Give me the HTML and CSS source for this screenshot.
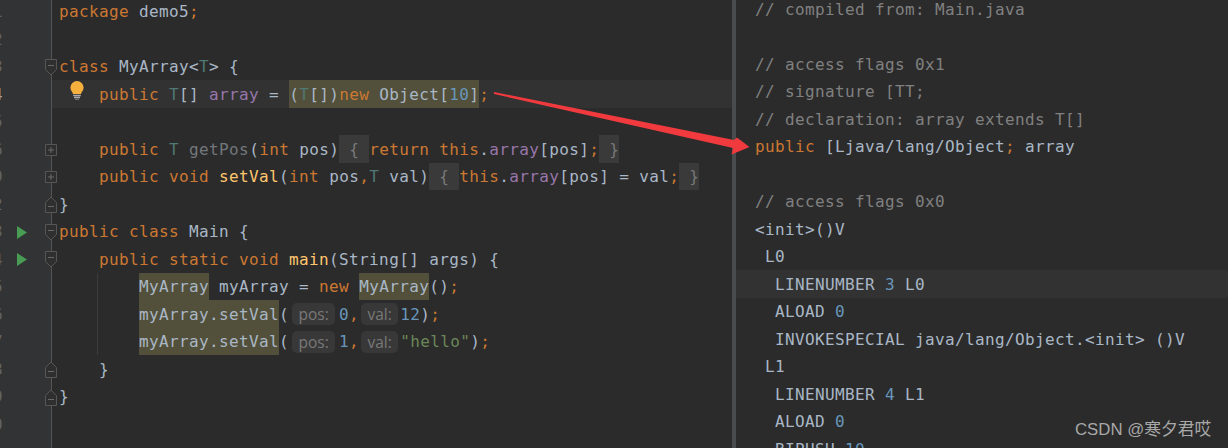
FILE: index.html
```html
<!DOCTYPE html>
<html lang="en">
<head>
<meta charset="utf-8">
<title>Main.java</title>
<link rel="stylesheet" href="styles.css">
</head>
<body>
<svg class="defs" width="0" height="0" aria-hidden="true">
  <symbol id="fold-open" viewBox="0 0 12 17"><path d="M.5 .5H11.5V10.5L6 16 .5 10.5Z" fill="#2f2f30" stroke="#565656"/><path d="M3 6.500H9" stroke="#6a6a6a"/></symbol>
  <symbol id="fold-end" viewBox="0 0 12 17"><path d="M.5 16.500H11.500V6.500L6 1 .5 6.500Z" fill="#2f2f30" stroke="#565656"/><path d="M3 10.500H9" stroke="#6a6a6a"/></symbol>
  <symbol id="fold-plus" viewBox="0 0 12 12"><path d="M.5 .5H11.500V11.500H.5Z" fill="#2f2f30" stroke="#565656"/><path d="M3 6H9M6 3V9" stroke="#6a6a6a"/></symbol>
  <symbol id="run" viewBox="0 0 10 13"><path d="M0 0L10 6.500 0 13Z" fill="#499c54"/></symbol>
</svg>
<main class="window">
  <section class="editor">
    <div class="gutter">
      <div class="gline"><span class="num">1</span></div>
      <div class="gline"><span class="num">2</span></div>
      <div class="gline"><span class="num">3</span><svg class="fold tall"><use href="#fold-open"/></svg></div>
      <div class="gline"><span class="num cur">4</span></div>
      <div class="gline"><span class="num">5</span></div>
      <div class="gline"><span class="num">6</span><svg class="fold small"><use href="#fold-plus"/></svg></div>
      <div class="gline"><span class="num">9</span><svg class="fold small"><use href="#fold-plus"/></svg></div>
      <div class="gline"><span class="num">12</span><svg class="fold tall"><use href="#fold-end"/></svg></div>
      <div class="gline"><span class="num">13</span><svg class="run"><use href="#run"/></svg><svg class="fold tall"><use href="#fold-open"/></svg></div>
      <div class="gline"><span class="num">14</span><svg class="run"><use href="#run"/></svg><svg class="fold tall"><use href="#fold-open"/></svg></div>
      <div class="gline"><span class="num">15</span></div>
      <div class="gline"><span class="num">16</span></div>
      <div class="gline"><span class="num">17</span></div>
      <div class="gline"><span class="num">18</span><svg class="fold tall"><use href="#fold-end"/></svg></div>
      <div class="gline"><span class="num">19</span><svg class="fold tall"><use href="#fold-end"/></svg></div>
      <div class="gline"><span class="num">20</span></div>
    </div>
    <div class="code">
      <div class="line"><span class="k">package</span> demo5<span class="k">;</span></div>
      <div class="line"></div>
      <div class="line"><span class="k">class</span> MyArray&lt;<span class="tp">T</span>&gt; {</div>
      <div class="line hl"><svg class="bulb" viewBox="0 0 14 19" aria-hidden="true"><path d="M7 0a6.600 6.600 0 0 1 6.600 6.600c0 2.900-2 4-2.600 6.400H3C2.400 10.600.4 9.500.4 6.600A6.600 6.600 0 0 1 7 0Z" fill="#f4af3d"/><path d="M3.200 14.500H10.800M4 16.500H10" stroke="#a9a9a9" stroke-width="1.300"/><path d="M5 18.300H9" stroke="#777" stroke-width="1.200"/></svg>    <span class="k">public</span> <span class="tp">T</span>[] <span class="f">array</span> = <span class="rd">(<span class="tp">T</span>[])<span class="k">new</span> Object[<span class="n">10</span>]</span><span class="k">;</span></div>
      <div class="line"></div>
      <div class="line">    <span class="k">public</span> <span class="tp">T</span> <span class="un">getPos</span>(<span class="k">int</span> pos)<span class="fb"> { </span><span class="k">return this</span>.<span class="f">array</span>[pos]<span class="k">;</span><span class="fb"> }</span></div>
      <div class="line">    <span class="k">public void</span> <span class="m">setVal</span>(<span class="k">int</span> pos<span class="k">,</span><span class="tp">T</span> val)<span class="fb"> { </span><span class="k">this</span>.<span class="f">array</span>[pos] = val<span class="k">;</span><span class="fb"> }</span></div>
      <div class="line">}</div>
      <div class="line"><span class="k">public class</span> Main {</div>
      <div class="line">    <span class="k">public static void</span> <span class="m">main</span>(String[] args) {</div>
      <div class="line guide">        <span class="rd">MyArray</span> myArray = <span class="k">new</span> <span class="rd">MyArray</span>()<span class="k">;</span></div>
      <div class="line guide">        <span class="rd">myArray.setVal</span>(<span class="hint hint-pos">pos:</span><span class="n">0</span><span class="k">,</span><span class="hint hint-val">val:</span><span class="n">12</span>)<span class="k">;</span></div>
      <div class="line guide">        <span class="rd">myArray.setVal</span>(<span class="hint hint-pos">pos:</span><span class="n">1</span><span class="k">,</span><span class="hint hint-val">val:</span><span class="s">"hello"</span>)<span class="k">;</span></div>
      <div class="line">    }</div>
      <div class="line">}</div>
      <div class="line"></div>
    </div>
  </section>
  <div class="splitter"></div>
  <section class="bytecode">
    <div class="line"><span class="c">// compiled from: Main.java</span></div>
    <div class="line"></div>
    <div class="line"><span class="c">// access flags 0x1</span></div>
    <div class="line"><span class="c">// signature [TT;</span></div>
    <div class="line"><span class="c">// declaration: array extends T[]</span></div>
    <div class="line"><span class="k">public</span> [Ljava/lang/Object<span class="k">;</span> array</div>
    <div class="line"></div>
    <div class="line"><span class="c">// access flags 0x0</span></div>
    <div class="line">&lt;init&gt;()V</div>
    <div class="line"> L0</div>
    <div class="line hl">  LINENUMBER <span class="n">3</span> L0</div>
    <div class="line">  ALOAD <span class="n">0</span></div>
    <div class="line">  INVOKESPECIAL java/lang/Object.&lt;init&gt; ()V</div>
    <div class="line"> L1</div>
    <div class="line">  LINENUMBER <span class="n">4</span> L1</div>
    <div class="line">  ALOAD <span class="n">0</span></div>
    <div class="line">  BIPUSH <span class="n">10</span></div>
  </section>
</main>
<svg class="arrow" viewBox="0 0 1228 448" aria-hidden="true"><path d="M494 92L734 140 737 137.500 749.500 147 731.500 154.500 733 148 494 94Z" fill="#f03a3e"/></svg>
<div class="watermark">CSDN @寒夕君哎</div>
</body>
</html>
```
FILE: styles.css
```css
* { box-sizing: border-box; }
html, body { margin: 0; height: 448px; overflow: hidden; background: #2b2b2b; }
.defs { position: absolute; }

.window {
  display: flex;
  height: 448px;
  overflow: hidden;
  font: 16px/27.5px "DejaVu Sans Mono", monospace;
  letter-spacing: .37px;
  color: #a9b7c6;
}

.editor { display: flex; width: 732px; flex: none; }

.gutter {
  width: 52px;
  flex: none;
  height: 448px;
  background: #313335;
  border-right: 1px solid #555;
  position: relative;
  z-index: 1;
}
.gutter .gline:first-child { margin-top: -1.6px; }
.gline { height: 27.5px; display: flex; align-items: center; }
.num {
  width: 3px;
  display: flex;
  justify-content: flex-end;
  overflow: hidden;
  color: #606366;
  flex: none;
}
.num.cur { color: #a4a3a3; }
.run { width: 10px; height: 13px; margin-left: 14px; flex: none; }
.fold { margin-left: auto; margin-right: -6px; flex: none; width: 12px; }
.fold.tall { height: 17px; }
.fold.small { height: 12px; }

.code { flex: 1; min-width: 0; }
.code .line:first-child { margin-top: -2.2px; }
.code .line { padding-left: 7px; }

.line { height: 27.5px; padding-top: .6px; white-space: pre; position: relative; }
.line.hl { background: #323232; }
.guide::before {
  content: "";
  position: absolute;
  left: 45px;
  top: 0;
  bottom: 0;
  width: 1px;
  background: #3b3b3b;
}
.bulb { position: absolute; left: 18px; top: 1px; width: 14px; height: 19px; }

.k { color: #cc7832; }
.tp { color: #507874; }
.f { color: #9876aa; }
.m { color: #ffc66d; }
.n { color: #6897bb; }
.s { color: #6a8759; }
.c { color: #808080; }
.un { color: #72777c; }
.rd, .fb {
  display: inline-block;
  height: 27.5px;
  margin-top: -.6px;
  padding-top: .6px;
  vertical-align: top;
}
.rd { background: #52503a; }
.fb { background: #3a3a3a; color: #787878; }

.hint {
  display: inline-flex;
  align-items: center;
  justify-content: center;
  height: 22px;
  margin-top: 2.4px;
  vertical-align: top;
  background: #383838;
  color: #787878;
  border-radius: 5px;
  font: 15.5px/22px "Open Sans", sans-serif;
  letter-spacing: 0;
}
.hint-pos { width: 43px; margin-left: 3px; margin-right: 4px; }
.hint-val { width: 37px; margin-left: 2px; margin-right: 2px; }

.splitter { width: 4px; flex: none; background: #4a4b4c; }

.bytecode { flex: 1; min-width: 0; }
.bytecode .line:first-child { margin-top: -4.7px; }
.bytecode .line { padding-left: 19px; }

.arrow { position: absolute; left: 0; top: 0; width: 1228px; height: 448px; z-index: 2; pointer-events: none; }

.watermark {
  position: absolute;
  left: 1075px;
  top: 419px;
  z-index: 3;
  font: 16.8px/22px "Liberation Sans", "Noto Sans CJK SC", sans-serif;
  color: #a8a8a8;
  white-space: nowrap;
}
```
